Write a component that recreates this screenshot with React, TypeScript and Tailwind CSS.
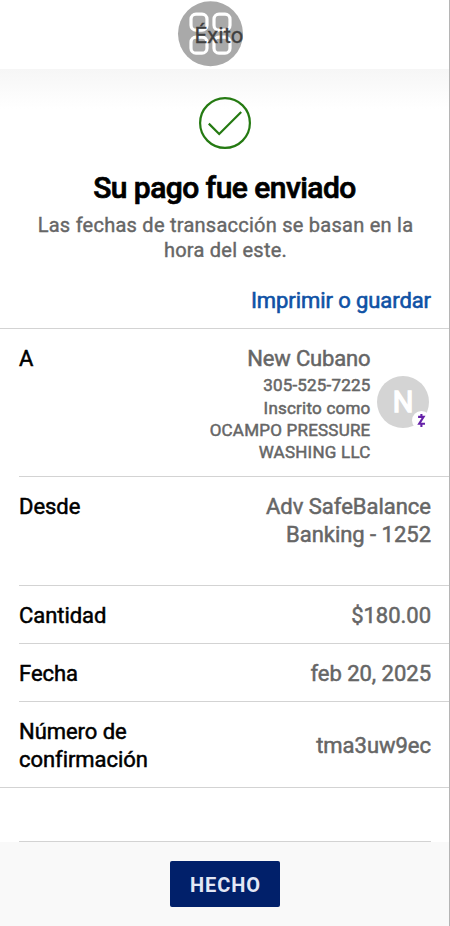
import type { ReactNode } from 'react'

const ROW_CLASSNAME = 'ml-[19px] flex justify-between border-b border-[#d3d3d3] pr-[18px]'

const LABEL_CLASSNAME =
  'text-[22px] leading-7 tracking-[-0.05px] text-black [-webkit-text-stroke:0.5px_#000000]'

const VALUE_CLASSNAME =
  'text-right text-[22px] leading-7 tracking-[-0.02px] text-[#666666] [-webkit-text-stroke:0.5px_#666666]'

const GRID_TILES = [
  { x: 13, y: 13.5 },
  { x: 36, y: 13.5 },
  { x: 13, y: 36.5 },
  { x: 36, y: 36.5 },
]

function FloatingMenu() {
  return (
    <svg className="absolute top-0 left-[177px]" width="67" height="67" viewBox="0 0 67 67" fill="none">
      <circle cx="33.5" cy="33.7" r="32.5" fill="#a9a9a9" />
      {GRID_TILES.map((t) => (
        <rect
          key={`${t.x}:${t.y}`}
          x={t.x + 1}
          y={t.y + 0.7}
          width="16"
          height="16"
          rx="5"
          stroke="#ffffff"
          strokeWidth="3.2"
        />
      ))}
    </svg>
  )
}

function SuccessIcon() {
  return (
    <svg width="52" height="52" viewBox="0 0 52 52" fill="none" stroke="#257a12" strokeWidth="2.2">
      <circle cx="26" cy="26" r="24.9" />
      <path d="M9.8 26.6 20.2 37 42.2 15" />
    </svg>
  )
}

function ContactAvatar() {
  return (
    <div className="relative flex size-[52px] items-center justify-center rounded-full bg-[#d4d4d4]">
      <span className="text-[29px] leading-none tracking-normal text-white [-webkit-text-stroke:1.4px_#ffffff]">
        N
      </span>
      <svg className="absolute top-[35px] left-[35px]" width="19" height="19" viewBox="0 0 19 19" fill="none">
        <circle cx="9.5" cy="9.5" r="9.5" fill="#ffffff" />
        <path
          d="M6.1 5.9H11.6L7.2 12.8H13M9.4 3V5.9M9.4 12.8V16"
          stroke="#6521a8"
          strokeWidth="2.1"
        />
      </svg>
    </div>
  )
}

function DetailRow(props: { label: ReactNode; className: string; children: ReactNode }) {
  return (
    <div className={`${ROW_CLASSNAME} ${props.className}`}>
      <div className={LABEL_CLASSNAME}>{props.label}</div>
      <div className={VALUE_CLASSNAME}>{props.children}</div>
    </div>
  )
}

export default function App() {
  return (
    <div className="flex h-[926px] w-[450px] flex-col overflow-hidden border-r border-[#b5b5b5] bg-white font-['Roboto',sans-serif] whitespace-nowrap">
      <header className="relative flex h-[69px] shrink-0 justify-center pt-[22px]">
        <FloatingMenu />
        <h1 className="relative ml-[-11px] text-[22px] leading-7 tracking-[0.1px] text-[#404040] [-webkit-text-stroke:0.3px_#404040]">
          Éxito
        </h1>
      </header>

      <main className="flex flex-1 flex-col">
        <section className="flex h-[260px] flex-col items-center border-b border-[#d3d3d3] bg-linear-to-b from-[#f6f6f6] to-white to-[40px] pt-7">
          <SuccessIcon />
          <h2 className="mt-[21px] text-[30px] leading-9 font-medium tracking-[-0.55px] text-black [-webkit-text-stroke:0.7px_#000000]">
            Su pago fue enviado
          </h2>
          <p className="mt-[7px] ml-[2px] text-center text-[20px] leading-[25px] tracking-[0.25px] text-[#666666] [-webkit-text-stroke:0.4px_#666666]">
            Las fechas de transacción se basan en la
            <br />
            hora del este.
          </p>
          <a
            href="#"
            className="mt-6 mr-[18px] self-end text-[22px] leading-7 tracking-[-0.08px] text-[#0f52a5] [-webkit-text-stroke:0.6px_#0f52a5]"
          >
            Imprimir o guardar
          </a>
        </section>

        <DetailRow label="A" className="h-[148px] pt-4">
          <div className="flex">
            <div>
              <div className="tracking-[-0.15px]">New Cubano</div>
              <div className="text-[17px] leading-6 tracking-[0.2px]">305-525-7225</div>
              <div className="text-[17px] leading-[22px] tracking-[0.22px]">
                Inscrito como
                <br />
                OCAMPO PRESSURE
                <br />
                WASHING LLC
              </div>
            </div>
            <div className="mt-[31px] mr-[2px] ml-[6.5px]">
              <ContactAvatar />
            </div>
          </div>
        </DetailRow>
        <DetailRow label="Desde" className="h-[109px] pt-4">
          Adv SafeBalance
          <br />
          Banking - 1252
        </DetailRow>
        <DetailRow label="Cantidad" className="h-[58px] items-center pt-[2px]">
          $180.00
        </DetailRow>
        <DetailRow label="Fecha" className="h-[58px] items-center pt-[2px]">
          feb 20, 2025
        </DetailRow>
        <div className="border-b border-[#d3d3d3]">
          <div className="flex h-[85px] items-center justify-between pt-[2px] pr-[18px] pl-[19px]">
            <div className={LABEL_CLASSNAME}>
              Número de
              <br />
              confirmación
            </div>
            <div className={VALUE_CLASSNAME}>tma3uw9ec</div>
          </div>
        </div>
        <div className="mr-[18px] ml-[19px] h-[54px] border-b border-[#d3d3d3]" />
      </main>

      <footer className="flex h-[84px] shrink-0 justify-center bg-[#f9f9f9] pt-[19px]">
        <button
          type="button"
          className="h-[46px] w-[110px] rounded-[2px] bg-[#01206a] pt-[2px] pl-[2px] text-[20px] font-bold tracking-[0.9px] text-[#e3e7f5]"
        >
          HECHO
        </button>
      </footer>
    </div>
  )
}
